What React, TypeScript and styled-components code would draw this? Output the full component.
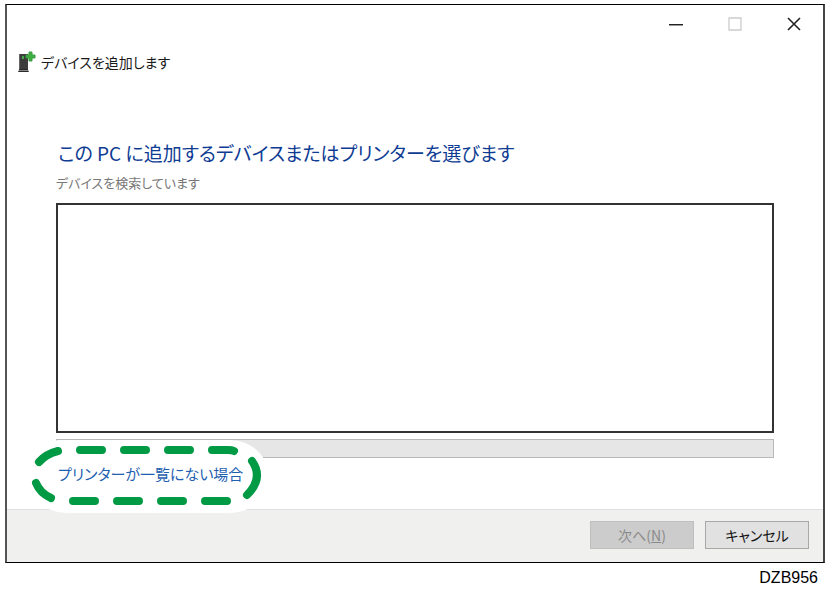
import React from "react";
import styled, { createGlobalStyle } from "styled-components";

const GlobalStyle = createGlobalStyle`
  * { box-sizing: border-box; }
  body {
    margin: 0;
    background: #fff;
    font-family: "Noto Sans CJK JP", sans-serif;
    font-feature-settings: "palt";
  }
`;

const Page = styled.main`
  padding: 4px 5px 0;
`;

const Dialog = styled.section`
  border-style: solid;
  border-width: 1px 2px;
  border-color: #000 #444 #000 #555;
  background: #fff;
`;

const TitleBar = styled.header`
  display: flex;
  justify-content: flex-end;
  height: 38px;
`;

const CaptionButton = styled.button`
  display: grid;
  place-items: center;
  width: 59px;
  padding: 0;
  border: 0;
  background: none;
`;

const Caption = styled.div`
  display: flex;
  align-items: center;
  gap: 5px;
  height: 38px;
  padding-left: 11px;
`;

const CaptionText = styled.h1`
  margin: 0;
  color: #1a1a1a;
  font-size: 14px;
  font-weight: 400;
  line-height: 20px;
`;

const Content = styled.div`
  padding: 58px 49px 0;
`;

const Heading = styled.h2`
  margin: 0;
  padding-left: 2px;
  color: #0f3c93;
  font-size: 19px;
  font-weight: 400;
  line-height: 28px;
`;

const Status = styled.p`
  margin: 6px 0 10px;
  color: #777;
  font-size: 13px;
  line-height: 20px;
`;

const DeviceList = styled.ul`
  height: 230px;
  margin: 0 0 6px;
  padding: 0;
  border: 2px solid #333;
  list-style: none;
`;

const Progress = styled.progress`
  display: block;
  width: 100%;
  height: 19px;
  border: 1px solid #b8b8b8;
  background: #e6e6e6;
  appearance: none;
  &::-webkit-progress-bar { background: #e6e6e6; }
`;

const LinkArea = styled.div`
  position: relative;
  height: 51px;
  padding: 3px 0 0 2px;
`;

const Highlight = styled.svg`
  position: absolute;
  top: -20px;
  left: -32px;
  pointer-events: none;
`;

const MissingLink = styled.a`
  position: relative;
  display: inline-block;
  color: #1f5fb0;
  font-size: 15px;
  line-height: 24px;
  text-decoration: none;
`;

const Footer = styled.footer`
  display: flex;
  justify-content: flex-end;
  gap: 11px;
  padding: 11px 14px 13px;
  border-top: 1px solid #dfdfdf;
  background: #f0f0ef;
`;

const ActionButton = styled.button`
  width: 104px;
  height: 28px;
  padding: 0;
  border: 1px solid #a8a8a8;
  background: #e1e1e1;
  color: #111;
  font: inherit;
  font-size: 14px;
  line-height: 24px;
  &:disabled {
    border-color: #bfbfbf;
    background: #ccc;
    color: #8a8a8a;
  }
`;

const FigureCode = styled.p`
  margin: 5px 7px 0;
  color: #000;
  font-family: "Liberation Sans", sans-serif;
  font-size: 16px;
  line-height: 20px;
  text-align: right;
`;

const DeviceIcon = () => (
  <svg width="18" height="24" viewBox="0 0 18 24" aria-hidden="true">
    <path d="M1 4h9v15H1z" fill="#3c3c3c" />
    <path d="M1 4h1v15H1z" fill="#666" />
    <path d="M1 19h9v1l1 2H0l1-2z" fill="#2a2a2a" />
    <path d="M1 20h9v1H1z" fill="#888" />
    <path d="M4 6h2v3H4z" fill="#3fae4a" />
    <path d="M11 2h3v3h3v3h-3v3h-3V8H8V5h3z" fill="#3fb03f" stroke="#3a9c45" />
  </svg>
);

const Ring = () => (
  <Highlight width="248" height="76" viewBox="0 0 248 76" aria-hidden="true">
    <path
      d="M38 2H205C228 2 244 18 244 38C244 60 229 75 203 75H43C18 74 1 58 1 38C1 17 15 2 38 2Z"
      fill="#fff"
    />
    <g fill="none" stroke="#009944" strokeWidth="8" strokeLinecap="round">
      <path d="M56 12H78M100 12H122M144 12H166M188 12H204Q208 12 210 13" />
      <path d="M49 63H71M93 63H115M137 63H159M181 63H203" />
      <path d="M15 24Q22 16 34 13" />
      <path d="M12 45Q16 55 27 60" />
      <path d="M228 23Q240 40 223 57" />
    </g>
  </Highlight>
);

export default function App() {
  return (
    <>
      <GlobalStyle />
      <Page>
        <Dialog aria-labelledby="dialog-title">
          <TitleBar>
            <CaptionButton type="button" aria-label="最小化">
              <svg width="14" height="14" aria-hidden="true">
                <path d="M0 7h14v1H0z" fill="#222" />
                <path d="M0 8h14v1H0z" fill="#999" />
              </svg>
            </CaptionButton>
            <CaptionButton type="button" aria-label="最大化" disabled>
              <svg width="14" height="14" aria-hidden="true">
                <path d="M1 1h12v12H1z" fill="none" stroke="#ccc" strokeWidth="1.3" />
              </svg>
            </CaptionButton>
            <CaptionButton type="button" aria-label="閉じる">
              <svg width="14" height="14" aria-hidden="true">
                <path d="M1 1l12 12M13 1L1 13" stroke="#222" strokeWidth="1.6" />
              </svg>
            </CaptionButton>
          </TitleBar>
          <Caption>
            <DeviceIcon />
            <CaptionText id="dialog-title">デバイスを追加します</CaptionText>
          </Caption>
          <Content>
            <Heading>この PC に追加するデバイスまたはプリンターを選びます</Heading>
            <Status id="search-status">デバイスを検索しています</Status>
            <DeviceList role="listbox" aria-labelledby="search-status" />
            <Progress aria-labelledby="search-status" value={0} max={100} />
            <LinkArea>
              <Ring />
              <MissingLink href="#not-listed">プリンターが一覧にない場合</MissingLink>
            </LinkArea>
          </Content>
          <Footer>
            <ActionButton type="button" disabled>
              次へ(<u>N</u>)
            </ActionButton>
            <ActionButton type="button">キャンセル</ActionButton>
          </Footer>
        </Dialog>
        <FigureCode>DZB956</FigureCode>
      </Page>
    </>
  );
}
